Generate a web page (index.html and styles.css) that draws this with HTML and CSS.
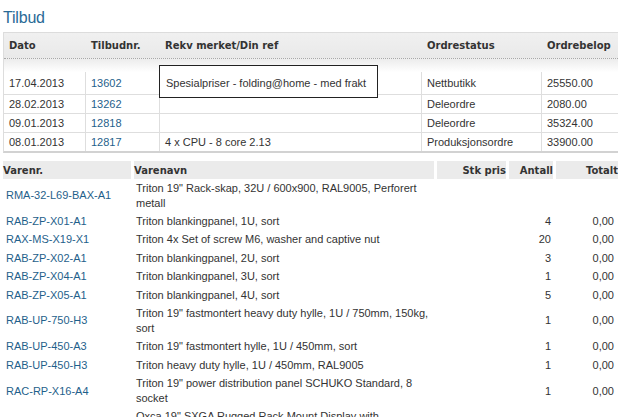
FILE: index.html
```html
<!DOCTYPE html>
<html lang="no">
<head>
<meta charset="utf-8">
<title>Tilbud</title>
<link rel="stylesheet" href="styles.css">
</head>
<body>
<div class="page">
  <h1 class="title">Tilbud</h1>

  <div class="orders">
    <div class="o-row o-head">
      <div class="c">Dato</div>
      <div class="c">Tilbudnr.</div>
      <div class="c">Rekv merket/Din ref</div>
      <div class="c">Ordrestatus</div>
      <div class="c">Ordrebelop</div>
    </div>
    <div class="o-spacer"></div>
    <div class="o-row o-data o-first">
      <div class="c">17.04.2013</div>
      <div class="c"><a href="#">13602</a></div>
      <div class="c ref"><div class="ref-box">Spesialpriser - folding@home - med frakt</div></div>
      <div class="c">Nettbutikk</div>
      <div class="c">25550.00</div>
    </div>
    <div class="o-row o-data">
      <div class="c">28.02.2013</div>
      <div class="c"><a href="#">13262</a></div>
      <div class="c"></div>
      <div class="c">Deleordre</div>
      <div class="c">2080.00</div>
    </div>
    <div class="o-row o-data">
      <div class="c">09.01.2013</div>
      <div class="c"><a href="#">12818</a></div>
      <div class="c"></div>
      <div class="c">Deleordre</div>
      <div class="c">35324.00</div>
    </div>
    <div class="o-row o-data o-last">
      <div class="c">08.01.2013</div>
      <div class="c"><a href="#">12817</a></div>
      <div class="c">4 x CPU - 8 core 2.13</div>
      <div class="c">Produksjonsordre</div>
      <div class="c">33900.00</div>
    </div>
  </div>

  <div class="items">
    <div class="i-row i-head">
      <div class="h code">Varenr.</div>
      <div class="h name">Varenavn</div>
      <div class="h num price">Stk pris</div>
      <div class="h num qty">Antall</div>
      <div class="h num total">Totalt</div>
    </div>

    <div class="i-row">
      <div class="code"><a href="#">RMA-32-L69-BAX-A1</a></div>
      <div class="name">Triton 19" Rack-skap, 32U / 600x900, RAL9005, Perforert<br>metall</div>
      <div class="num price"></div>
      <div class="num qty"></div>
      <div class="num total"></div>
    </div>
    <div class="i-row">
      <div class="code"><a href="#">RAB-ZP-X01-A1</a></div>
      <div class="name">Triton blankingpanel, 1U, sort</div>
      <div class="num price"></div>
      <div class="num qty">4</div>
      <div class="num total">0,00</div>
    </div>
    <div class="i-row">
      <div class="code"><a href="#">RAX-MS-X19-X1</a></div>
      <div class="name">Triton 4x Set of screw M6, washer and captive nut</div>
      <div class="num price"></div>
      <div class="num qty">20</div>
      <div class="num total">0,00</div>
    </div>
    <div class="i-row">
      <div class="code"><a href="#">RAB-ZP-X02-A1</a></div>
      <div class="name">Triton blankingpanel, 2U, sort</div>
      <div class="num price"></div>
      <div class="num qty">3</div>
      <div class="num total">0,00</div>
    </div>
    <div class="i-row">
      <div class="code"><a href="#">RAB-ZP-X04-A1</a></div>
      <div class="name">Triton blankingpanel, 3U, sort</div>
      <div class="num price"></div>
      <div class="num qty">1</div>
      <div class="num total">0,00</div>
    </div>
    <div class="i-row">
      <div class="code"><a href="#">RAB-ZP-X05-A1</a></div>
      <div class="name">Triton blankingpanel, 4U, sort</div>
      <div class="num price"></div>
      <div class="num qty">5</div>
      <div class="num total">0,00</div>
    </div>
    <div class="i-row">
      <div class="code"><a href="#">RAB-UP-750-H3</a></div>
      <div class="name">Triton 19" fastmontert heavy duty hylle, 1U / 750mm, 150kg,<br>sort</div>
      <div class="num price"></div>
      <div class="num qty">1</div>
      <div class="num total">0,00</div>
    </div>
    <div class="i-row">
      <div class="code"><a href="#">RAB-UP-450-A3</a></div>
      <div class="name">Triton 19" fastmontert hylle, 1U / 450mm, sort</div>
      <div class="num price"></div>
      <div class="num qty">1</div>
      <div class="num total">0,00</div>
    </div>
    <div class="i-row">
      <div class="code"><a href="#">RAB-UP-450-H3</a></div>
      <div class="name">Triton heavy duty hylle, 1U / 450mm, RAL9005</div>
      <div class="num price"></div>
      <div class="num qty">1</div>
      <div class="num total">0,00</div>
    </div>
    <div class="i-row">
      <div class="code"><a href="#">RAC-RP-X16-A4</a></div>
      <div class="name">Triton 19" power distribution panel SCHUKO Standard, 8<br>socket</div>
      <div class="num price"></div>
      <div class="num qty">1</div>
      <div class="num total">0,00</div>
    </div>
    <div class="i-row">
      <div class="code"><a href="#">OXC-SXGA-19-RM</a></div>
      <div class="name">Oxca 19" SXGA Rugged Rack Mount Display with<br>keyboard and touchpad, 1U, 17" TFT,<br>sort</div>
      <div class="num price"></div>
      <div class="num qty">1</div>
      <div class="num total">0,00</div>
    </div>
  </div>
</div>
</body>
</html>
```

FILE: styles.css
```css
html, body {
  margin: 0;
  padding: 0;
  background: #ffffff;
}

body {
  font-family: "Liberation Sans", Arial, sans-serif;
  font-size: 11px;
  color: #333333;
}

a {
  color: #1f5f8b;
  text-decoration: none;
}

.page {
  padding: 0 0 0 3px;
}

.title {
  margin: 8px 0 4px 0;
  height: 20px;
  font-size: 16px;
  line-height: 20px;
  font-weight: normal;
  color: #2a6a96;
  letter-spacing: -0.2px;
}

/* ---------- orders table ---------- */
.orders {
  border-left: 1px solid #dddddd;
  border-bottom: 2px solid #d2d2d2;
}

.o-row {
  display: grid;
  grid-template-columns: 81px 74px 262px 120px 1fr;
}

.o-row .c {
  padding-left: 5px;
  white-space: nowrap;
}

.o-row .c + .c {
  border-left: 1px solid transparent;
}

.o-head {
  height: 25px;
  border-top: 1px solid #dcdcdc;
  border-bottom: 1px dotted #a8a8a8;
  background: linear-gradient(#f0f0f0, #e9e9e9);
  align-items: center;
}

.o-head .c {
  font-family: "DejaVu Sans", Verdana, sans-serif;
  font-weight: bold;
  font-size: 10px;
  color: #333333;
}

.o-spacer {
  height: 13px;
  background: linear-gradient(#ececec, #ffffff);
}

.o-data {
  height: 18px;
  border-bottom: 1px solid #dedede;
}

.o-data .c {
  display: flex;
  align-items: center;
}

.o-data .c + .c {
  border-left: 1px solid #dedede;
}

.o-first {
  height: 22px;
}

.o-last {
  border-bottom: none;
}

.ref {
  position: relative;
}

.ref-box {
  position: absolute;
  left: -1px;
  top: -7px;
  width: 219px;
  height: 33px;
  box-sizing: border-box;
  border: 1px solid #222222;
  background: #ffffff;
  padding: 2px 0 0 6px;
  display: flex;
  align-items: center;
  color: #333333;
}

/* ---------- items table ---------- */
.items {
  margin-top: 8px;
}

.i-row {
  display: grid;
  grid-template-columns: 128px 300px 69px 44px 1fr;
  column-gap: 3px;
}

.i-row > div {
  line-height: 15px;
  padding: 1.7px 0;
  display: flex;
  align-items: center;
}

.i-row .code {
  padding-left: 3px;
}

.i-row .name {
  padding-left: 2px;
  display: block;
}

.i-row .num {
  justify-content: flex-end;
}

.i-row .price {
  padding-right: 4px;
}

.i-row .qty {
  padding-right: 2px;
}

.i-row .total {
  padding-right: 4px;
}

.i-head > div.h {
  height: 18px;
  padding: 0;
  background: #ebebeb;
  font-family: "DejaVu Sans", Verdana, sans-serif;
  font-weight: bold;
  font-size: 10px;
  color: #333333;
  display: flex;
  align-items: center;
}

.i-head .code {
  padding-left: 3px;
}

.i-head .name {
  padding-left: 2px;
}

.i-head .price {
  padding-right: 4px;
}

.i-head .qty {
  padding-right: 2px;
}

.i-head .total {
  padding-right: 4px;
}
```
